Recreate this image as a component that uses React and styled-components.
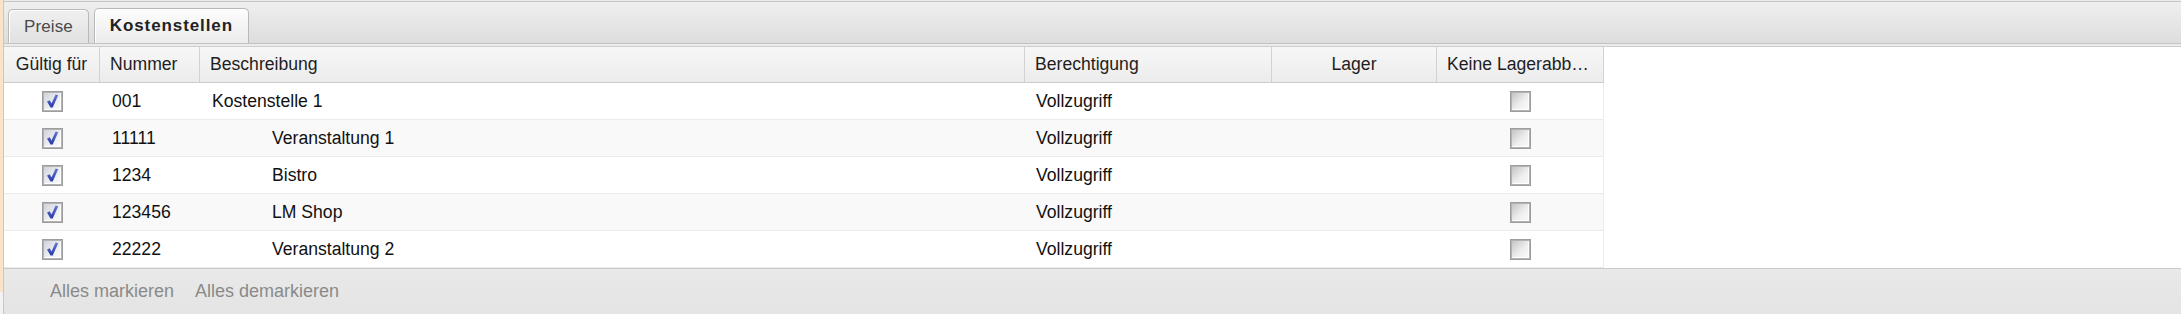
import React from "react";
import styled, { createGlobalStyle } from "styled-components";

const Global = createGlobalStyle`
  html, body { margin: 0; padding: 0; background: #ffffff; }
  body { font-family: "Liberation Sans", Arial, sans-serif; }
  * { box-sizing: border-box; }
`;

const Frame = styled.div`
  display: flex;
  width: 2181px;
  height: 314px;
  overflow: hidden;
  background: #ffffff;
`;

const Edge = styled.div`
  flex: 0 0 3px;
  background: linear-gradient(#fbe2cb 0, #fbe2cb 292px, #f2f2f2 292px);
`;

const Panel = styled.div`
  flex: 1;
  display: flex;
  flex-direction: column;
  border-left: 1px solid #c8c8c8;
  min-width: 0;
`;

const TopStrip = styled.div`
  padding-top: 1px;
  background: #ececec;
`;

const TabBar = styled.div`
  display: flex;
  align-items: flex-end;
  gap: 5px;
  height: 43px;
  padding-left: 4px;
  border-top: 1px solid #c6c6c6;
  border-bottom: 1px solid #c3c3c3;
  background: linear-gradient(#efefef, #dddddd);
`;

const Tab = styled.div`
  display: flex;
  align-items: center;
  height: ${(p) => (p.$active ? "35px" : "34px")};
  padding: 0 15px 0 15px;
  border: 1px solid #b9b9b9;
  border-bottom: none;
  border-radius: 5px 5px 0 0;
  box-shadow: inset 1px 1px 0 #ffffff;
  background: ${(p) =>
    p.$active
      ? "linear-gradient(#fdfdfd, #ececec)"
      : "linear-gradient(#f0f0f0, #e1e1e1)"};
  color: ${(p) => (p.$active ? "#222222" : "#4a4a4a")};
  font-size: 17px;
  font-weight: ${(p) => (p.$active ? 700 : 400)};
  letter-spacing: ${(p) => (p.$active ? "0.9px" : "0.1px")};
  white-space: nowrap;
`;

const Separator = styled.div`
  height: 3px;
  background: #ececec;
  border-bottom: 1px solid #cdcdcd;
`;

const Body = styled.div`
  flex: 1;
  background: #ffffff;
`;

const Grid = styled.div`
  display: grid;
  grid-template-columns: 96px 100px 825px 247px 165px 167px;
  width: 1600px;
  font-size: 17.6px;
`;

const HeadCell = styled.div`
  display: flex;
  align-items: center;
  justify-content: ${(p) => (p.$align === "center" ? "center" : "flex-start")};
  height: 36px;
  padding: 0 ${(p) => (p.$align === "center" ? "4px" : "6px")} 0
    ${(p) => (p.$align === "center" ? "4px" : "10px")};
  background: linear-gradient(#f7f7f7, #ececec);
  border-right: 1px solid #d2d2d2;
  border-bottom: 1px solid #cdcdcd;
  color: #1e1e1e;
  white-space: nowrap;
`;

const Cell = styled.div`
  display: flex;
  align-items: center;
  justify-content: ${(p) => (p.$align === "center" ? "center" : "flex-start")};
  height: 37px;
  padding-left: ${(p) => (p.$pad !== undefined ? p.$pad : 0)}px;
  background: ${(p) => (p.$alt ? "#f9f9f9" : "#ffffff")};
  border-bottom: 1px solid #ebebeb;
  border-right: ${(p) => (p.$last ? "1px solid #ececec" : "none")};
  color: #111111;
  white-space: nowrap;
`;

const Footer = styled.div`
  display: flex;
  align-items: center;
  gap: 21px;
  height: 46px;
  padding-left: 46px;
  border-top: 1px solid #cacaca;
  background: linear-gradient(#e9e9e9, #e4e4e4);
  font-size: 18px;
  color: #8a8a8a;
`;

const FooterLink = styled.span`
  cursor: pointer;
`;

const CheckSvg = styled.svg`
  display: block;
  width: 21px;
  height: 21px;
`;

function CheckBox({ checked }) {
  const id = checked ? "cbOn" : "cbOff";
  return (
    <CheckSvg viewBox="0 0 21 21">
      <defs>
        <linearGradient id={id} x1="0" y1="0" x2="1" y2="1">
          <stop offset="0" stopColor={checked ? "#cfd3da" : "#c4c4c4"} />
          <stop offset="0.55" stopColor={checked ? "#eceef1" : "#eeeeee"} />
          <stop offset="1" stopColor="#fbfbfb" />
        </linearGradient>
        <linearGradient id="cbMark" x1="0" y1="0" x2="0" y2="1">
          <stop offset="0" stopColor="#6576d6" />
          <stop offset="1" stopColor="#2a3aa8" />
        </linearGradient>
      </defs>
      <rect x="0" y="0" width="21" height="21" fill="#9d9d9d" />
      <rect x="1" y="1" width="19" height="19" fill="#b3b3b3" />
      <rect x="2" y="2" width="17" height="17" fill={`url(#${id})`} />
      <path d="M2.5 18.5 L18.5 18.5 L18.5 2.5" fill="none" stroke="#ffffff" strokeOpacity="0.9" />
      {checked && (
        <path
          d="M5 10.4 L7.8 9.2 L9.5 12.4 L13.6 3.6 L16.2 4.3 L10.7 16.4 L8.5 16.4 Z"
          fill="url(#cbMark)"
        />
      )}
    </CheckSvg>
  );
}

const rows = [
  { nr: "001", desc: "Kostenstelle 1", level: 0 },
  { nr: "11111", desc: "Veranstaltung 1", level: 1 },
  { nr: "1234", desc: "Bistro", level: 1 },
  { nr: "123456", desc: "LM Shop", level: 1 },
  { nr: "22222", desc: "Veranstaltung 2", level: 1 },
];

export default function App() {
  return (
    <>
      <Global />
      <Frame>
        <Edge />
        <Panel>
          <TopStrip>
            <TabBar>
              <Tab>Preise</Tab>
              <Tab $active>Kostenstellen</Tab>
            </TabBar>
          </TopStrip>
          <Separator />
          <Body>
            <Grid>
              <HeadCell $align="center">Gültig für</HeadCell>
              <HeadCell>Nummer</HeadCell>
              <HeadCell>Beschreibung</HeadCell>
              <HeadCell>Berechtigung</HeadCell>
              <HeadCell $align="center">Lager</HeadCell>
              <HeadCell>Keine Lagerabb…</HeadCell>
              {rows.map((r, i) => {
                const alt = i % 2 === 1;
                return (
                  <React.Fragment key={r.nr}>
                    <Cell $alt={alt} $align="center">
                      <CheckBox checked />
                    </Cell>
                    <Cell $alt={alt} $pad={12}>{r.nr}</Cell>
                    <Cell $alt={alt} $pad={r.level === 0 ? 12 : 72}>{r.desc}</Cell>
                    <Cell $alt={alt} $pad={11}>Vollzugriff</Cell>
                    <Cell $alt={alt} />
                    <Cell $alt={alt} $align="center" $last>
                      <CheckBox />
                    </Cell>
                  </React.Fragment>
                );
              })}
            </Grid>
          </Body>
          <Footer>
            <FooterLink>Alles markieren</FooterLink>
            <FooterLink>Alles demarkieren</FooterLink>
          </Footer>
        </Panel>
      </Frame>
    </>
  );
}
